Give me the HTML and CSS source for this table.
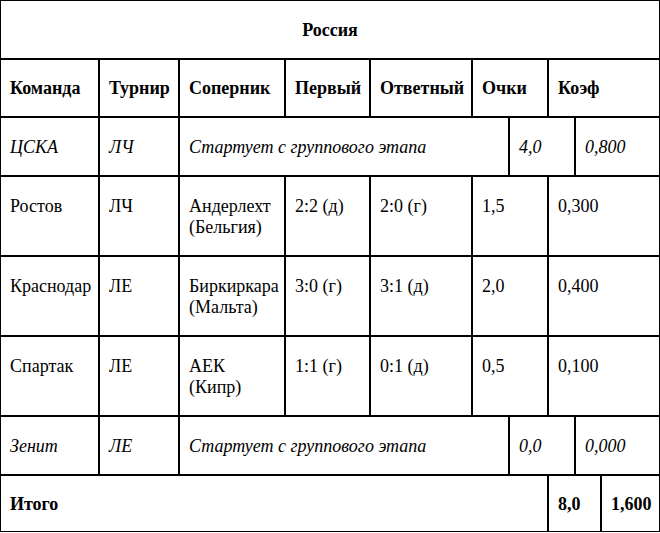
FILE: index.html
```html
<!DOCTYPE html>
<html lang="ru">
<head>
<meta charset="utf-8">
<title>Россия</title>
<link rel="stylesheet" href="styles.css">
</head>
<body>
<div class="board">
  <div class="row row-title">
    <div class="cell title">Россия</div>
  </div>
  <div class="row row-full row-head">
    <div class="cell">Команда</div>
    <div class="cell">Турнир</div>
    <div class="cell">Соперник</div>
    <div class="cell">Первый</div>
    <div class="cell">Ответный</div>
    <div class="cell">Очки</div>
    <div class="cell">Коэф</div>
  </div>
  <div class="row row-note">
    <div class="cell">ЦСКА</div>
    <div class="cell">ЛЧ</div>
    <div class="cell">Стартует с группового этапа</div>
    <div class="cell">4,0</div>
    <div class="cell">0,800</div>
  </div>
  <div class="row row-full">
    <div class="cell">Ростов</div>
    <div class="cell">ЛЧ</div>
    <div class="cell">Андерлехт<br>(Бельгия)</div>
    <div class="cell">2:2 (д)</div>
    <div class="cell">2:0 (г)</div>
    <div class="cell">1,5</div>
    <div class="cell">0,300</div>
  </div>
  <div class="row row-full">
    <div class="cell">Краснодар</div>
    <div class="cell">ЛЕ</div>
    <div class="cell">Биркиркара<br>(Мальта)</div>
    <div class="cell">3:0 (г)</div>
    <div class="cell">3:1 (д)</div>
    <div class="cell">2,0</div>
    <div class="cell">0,400</div>
  </div>
  <div class="row row-full">
    <div class="cell">Спартак</div>
    <div class="cell">ЛЕ</div>
    <div class="cell">АЕК<br>(Кипр)</div>
    <div class="cell">1:1 (г)</div>
    <div class="cell">0:1 (д)</div>
    <div class="cell">0,5</div>
    <div class="cell">0,100</div>
  </div>
  <div class="row row-note">
    <div class="cell">Зенит</div>
    <div class="cell">ЛЕ</div>
    <div class="cell">Стартует с группового этапа</div>
    <div class="cell">0,0</div>
    <div class="cell">0,000</div>
  </div>
  <div class="row row-total">
    <div class="cell">Итого</div>
    <div class="cell">8,0</div>
    <div class="cell">1,600</div>
  </div>
</div>
</body>
</html>
```

FILE: styles.css
```css
html, body {
  margin: 0;
  padding: 0;
  background: #fff;
}

body {
  font-family: "Liberation Serif", "Times New Roman", serif;
  font-size: 18px;
  line-height: 21px;
  color: #000;
}

.board {
  width: 660px;
}

.row {
  display: grid;
}

.cell {
  border: 1px solid #000;
  padding: 19px 9px 17px;
  white-space: nowrap;
}

.row-title {
  grid-template-columns: 660px;
  font-weight: bold;
}

.title {
  text-align: center;
}

.row-full {
  grid-template-columns: 99px 80px 106px 85px 102px 76px 112px;
}

.row-head {
  font-weight: bold;
}

.row-head .cell {
  padding: 18px 9px 17px;
}

.row-note {
  grid-template-columns: 99px 80px 330px 66px 85px;
  font-style: italic;
}

.row-total {
  grid-template-columns: 548px 53px 59px;
  font-weight: bold;
}

.row-total .cell {
  padding: 18px 9px 16px;
}
```
